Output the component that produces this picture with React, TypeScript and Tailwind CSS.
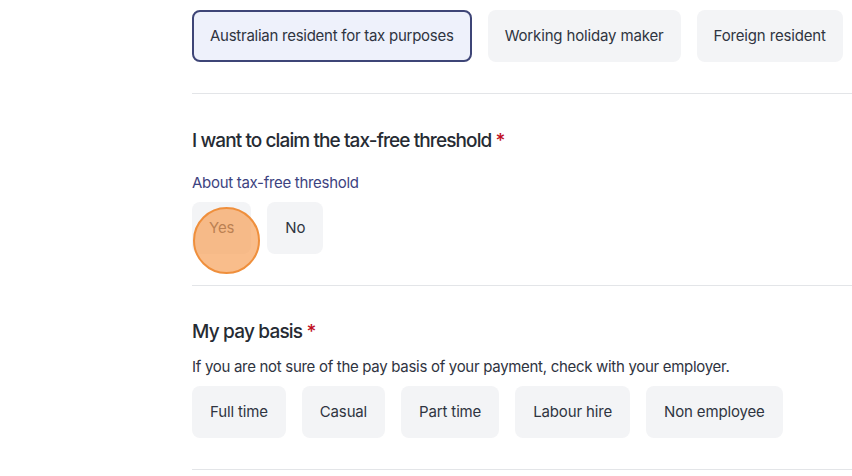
import React from "react";

const font = { fontFamily: "Inter, 'Noto Sans', sans-serif" };

function Opt({ label, selected = false, tight = false }: { label: string; selected?: boolean; tight?: boolean }) {
  const base = "shrink-0 whitespace-nowrap h-[52px] rounded-[8px] text-[15px] text-[#2f3441]";
  if (selected) {
    return (
      <button className={base + " px-[16px] border-2 border-[#3e4577] bg-[#eef1fb] tracking-[-0.26px]"}>{label}</button>
    );
  }
  return (
    <button
      className={
        tight
          ? base + " px-[17px] bg-[#f3f4f6] tracking-[-0.15px]"
          : base + " px-[18px] bg-[#f3f4f6] tracking-[-0.15px]"
      }
    >
      {label}
    </button>
  );
}

export default function App() {
  return (
    <div className="w-[852px] h-[476px] bg-white overflow-hidden" style={font}>
      <div className="pl-[192px] pt-[10px]">
        <div className="flex gap-[16px]">
          <Opt label="Australian resident for tax purposes" selected />
          <Opt label="Working holiday maker" tight />
          <Opt label="Foreign resident" tight />
        </div>
        <div className="mt-[31px] h-px bg-[#e3e5e8]" />

        <h2 className="mt-[33px] whitespace-nowrap text-[19px] leading-[28px] font-medium text-[#262b33] tracking-[-0.9px]">
          I want to claim the tax-free threshold <span className="text-[#c1121f]">*</span>
        </h2>
        <div className="mt-[17px] text-[15px] leading-[22px] tracking-[-0.3px] text-[#3d4380]">About tax-free threshold</div>
        <div className="mt-[8px] flex gap-[16px] relative">
          <Opt label="Yes" tight />
          <Opt label="No" />
          <div className="absolute left-[1px] top-[5px] w-[67px] h-[67px] rounded-full border-2 border-[#ef8f3c] bg-[#f6a15a]/70" />
        </div>
        <div className="mt-[31px] h-px bg-[#e3e5e8]" />

        <h2 className="mt-[32px] whitespace-nowrap text-[19px] leading-[28px] font-medium text-[#262b33] tracking-[-0.8px]">
          My pay basis <span className="text-[#c1121f]">*</span>
        </h2>
        <div className="mt-[10px] whitespace-nowrap text-[15px] leading-[22px] tracking-[-0.3px] text-[#2f3441]">
          If you are not sure of the pay basis of your payment, check with your employer.
        </div>
        <div className="mt-[8px] flex gap-[16px]">
          <Opt label="Full time" />
          <Opt label="Casual" />
          <Opt label="Part time" />
          <Opt label="Labour hire" />
          <Opt label="Non employee" />
        </div>
        <div className="mt-[31px] h-px bg-[#e3e5e8]" />
      </div>
    </div>
  );
}
